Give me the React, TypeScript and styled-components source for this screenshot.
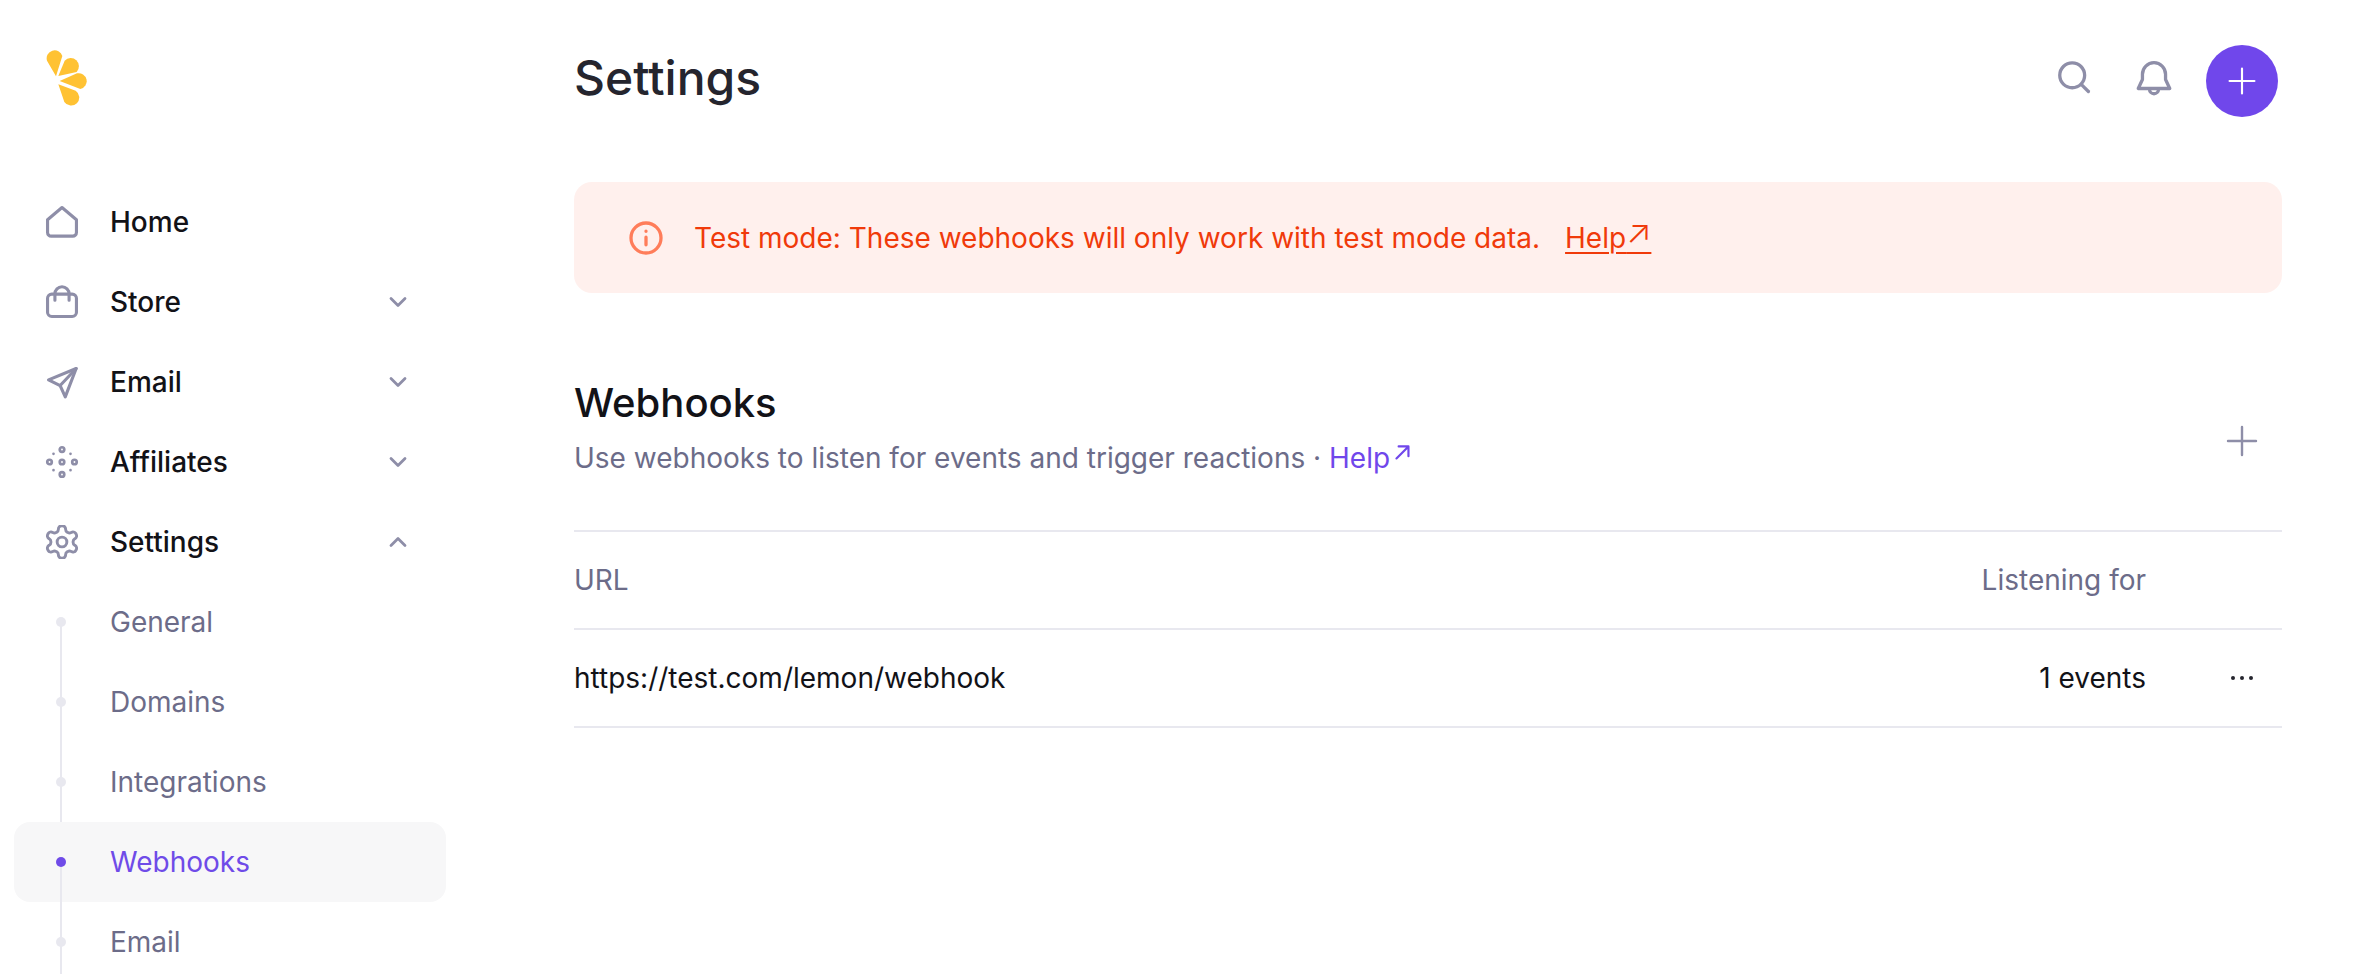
import { FC, ReactNode } from "react";
import styled, { createGlobalStyle } from "styled-components";

const GlobalStyle = createGlobalStyle`
  html, body {
    margin: 0;
    padding: 0;
    height: 974px;
    overflow: hidden;
    background: #fff;
    font-family: Inter, "Liberation Sans", sans-serif;
  }
`;

const Shell = styled.div`
  display: grid;
  grid-template-columns: 574px 1fr;
  height: 974px;
  overflow: hidden;
`;

const Sidebar = styled.aside`
  display: flex;
  flex-direction: column;
  padding: 50px 0 0 14px;
`;

const LogoWrap = styled.div`
  height: 132px;
  padding-left: 32px;
`;

const Nav = styled.nav`
  display: flex;
  flex-direction: column;
  width: 432px;
`;

const NavRow = styled.div`
  display: flex;
  align-items: center;
  height: 80px;
  flex: none;
  padding-left: 32px;
  font-size: 28px;
  font-weight: 500;
  color: #121217;
  svg.icon {
    flex: none;
    width: 34px;
    height: 34px;
    margin: 0 31px 0 -1px;
    color: #8e8ea8;
  }
`;

const Chevron = styled.svg`
  margin-left: auto;
  margin-right: 34px;
  width: 28px;
  height: 28px;
  color: #8e8ea8;
`;

const SubRow = styled.div<{ $active?: boolean }>`
  position: relative;
  display: flex;
  align-items: center;
  height: 80px;
  flex: none;
  padding-left: 96px;
  font-size: 28px;
  font-weight: 400;
  border-radius: 16px;
  color: ${(p) => (p.$active ? "#6f4be8" : "#6c6c89")};
  background: ${(p) => (p.$active ? "#f7f7f8" : "transparent")};
  &::before {
    content: "";
    position: absolute;
    left: 46px;
    top: 40px;
    width: 2px;
    height: 80px;
    background: #e8e8ef;
  }
  &::after {
    content: "";
    position: absolute;
    left: 42px;
    top: 35px;
    width: 10px;
    height: 10px;
    border-radius: 50%;
    background: ${(p) => (p.$active ? "#6f4be8" : "#e8e8ef")};
  }
`;

const Main = styled.main`
  padding: 0 78px 0 0;
  display: flex;
  flex-direction: column;
`;

const TopBar = styled.header`
  display: flex;
  align-items: center;
  height: 155px;
  flex: none;
`;

const PageTitle = styled.h1`
  margin: 0;
  font-size: 48px;
  font-weight: 500;
  color: #25252e;
`;

const TopActions = styled.div`
  margin-left: auto;
  display: flex;
  align-items: center;
  gap: 44px;
  margin-right: 4px;
`;

const GhostIcon = styled.button`
  display: flex;
  padding: 0;
  border: 0;
  background: none;
  color: #8e8ea8;
  svg {
    width: 36px;
    height: 36px;
  }
`;

const CreateButton = styled.button`
  display: flex;
  align-items: center;
  justify-content: center;
  width: 72px;
  height: 72px;
  margin: 7px 0 0 -10px;
  padding: 0;
  border: 0;
  border-radius: 50%;
  background: #7047eb;
  color: #fff;
  svg {
    width: 32px;
    height: 32px;
  }
`;

const Banner = styled.div`
  display: flex;
  align-items: center;
  height: 111px;
  margin-top: 27px;
  padding-left: 54px;
  flex: none;
  border-radius: 18px;
  background: #fff0ed;
  color: #f03a0a;
  font-size: 28px;
  svg.info {
    width: 36px;
    height: 36px;
    margin-right: 30px;
    color: #ff7d5a;
  }
`;

const BannerLink = styled.a`
  margin-left: 25px;
  color: #f03a0a;
  text-decoration: underline;
  text-decoration-thickness: 2px;
  text-underline-offset: 4px;
`;

const ArrowGlyph = styled.span`
  font-size: 33px;
  font-weight: 300;
  line-height: 0;
  position: relative;
  top: -5px;
`;

const SectionHead = styled.section`
  display: flex;
  align-items: center;
  height: 239px;
  flex: none;
  padding-top: 58px;
  box-sizing: border-box;
  border-bottom: 2px solid #e8e8ef;
`;

const HeadText = styled.div`
  display: flex;
  flex-direction: column;
  gap: 14px;
  margin-bottom: 29px;
`;

const SectionTitle = styled.h2`
  margin: 0;
  font-size: 40px;
  font-weight: 500;
  color: #121217;
`;

const SectionSub = styled.p`
  margin: 0;
  font-size: 28px;
  color: #6c6c89;
  a {
    display: inline-flex;
    align-items: flex-start;
    color: #7047eb;
    svg {
      width: 24px;
      height: 24px;
      margin-left: 1px;
    }
  }
`;

const HeadAdd = styled.button`
  display: flex;
  margin-left: auto;
  margin-right: 22px;
  padding: 0;
  border: 0;
  background: none;
  color: #8e8ea8;
  svg {
    width: 36px;
    height: 36px;
  }
`;

const TableRow = styled.div<{ $head?: boolean }>`
  display: grid;
  grid-template-columns: 1fr auto 136px;
  align-items: center;
  height: 96px;
  border-bottom: 2px solid #e8e8ef;
  font-size: 28px;
  color: ${(p) => (p.$head ? "#6c6c89" : "#121217")};
`;

const MoreCell = styled.div`
  display: flex;
  justify-content: flex-end;
  padding-right: 22px;
  color: #25252e;
  svg {
    width: 36px;
    height: 36px;
  }
`;

const Stroke: FC<{ className?: string; children: ReactNode; w?: number; box?: string }> = ({ className, children, w = 2.2, box = "0 0 24 24" }) => (
  <svg className={className} viewBox={box} fill="none" stroke="currentColor" strokeWidth={w} strokeLinecap="round" strokeLinejoin="round">
    {children}
  </svg>
);

const Logo = () => (
  <svg width="42" height="56" viewBox="137 90 126 168" fill="#ffc233">
    <path d="M167 169 L140 122 A24 24 0 1 1 186 108 Z" />
    <path d="M174 168 L193 122 A24.5 24.5 0 1 1 229 156 Z" />
    <path d="M178 183 L230 160 A24 24 0 1 1 240 207 Z" />
    <path d="M174 193 L226 212 A24.5 24.5 0 1 1 192 246 Z" />
  </svg>
);

const ChevronIcon: FC<{ up?: boolean }> = ({ up }) => (
  <Chevron viewBox="0 0 24 24" fill="none" stroke="currentColor" strokeWidth="2.4" strokeLinecap="round" strokeLinejoin="round">
    <path d={up ? "M6 15l6-6 6 6" : "M6 9l6 6 6-6"} />
  </Chevron>
);

const ArrowUpRight = () => (
  <svg viewBox="0 0 22 22" fill="none" stroke="currentColor" strokeWidth="2" strokeLinecap="round" strokeLinejoin="round">
    <path d="M5 16L16 5M7 5h9v9" />
  </svg>
);

const PlusIcon = () => (
  <svg viewBox="0 0 36 36" fill="none" stroke="currentColor" strokeWidth="2.4" strokeLinecap="round">
    <path d="M18 4v28M4 18h28" />
  </svg>
);

export default function App() {
  return (
    <Shell>
      <GlobalStyle />
      <Sidebar>
        <LogoWrap>
          <Logo />
        </LogoWrap>
        <Nav>
          <NavRow>
            <Stroke className="icon">
              <path d="M1.8 10.4L12 1.8l10.2 8.6v9a2.6 2.6 0 0 1-2.6 2.6H4.4a2.6 2.6 0 0 1-2.6-2.6z" />
            </Stroke>
            Home
          </NavRow>
          <NavRow>
            <Stroke className="icon">
              <rect x="1.8" y="6.4" width="20.4" height="15.8" rx="3" />
              <path d="M7 10.8V6.2a5 5 0 0 1 10 0v4.6" />
            </Stroke>
            Store
            <ChevronIcon />
          </NavRow>
          <NavRow>
            <Stroke className="icon">
              <path d="M22 2.5L2.5 10.5l8.2 4 3.6 8z" />
              <path d="M22 2.5L10.7 14.5" />
            </Stroke>
            Email
            <ChevronIcon />
          </NavRow>
          <NavRow>
            <Stroke className="icon" w={1.9}>
              <circle cx="12" cy="3.2" r="1.6" />
              <circle cx="3.2" cy="12" r="1.6" />
              <circle cx="12" cy="12" r="1.6" />
              <circle cx="20.8" cy="12" r="1.6" />
              <circle cx="12" cy="20.8" r="1.6" />
              <path d="M6 6.2h.01M18 6.2h.01M6 17.8h.01M18 17.8h.01" />
            </Stroke>
            Affiliates
            <ChevronIcon />
          </NavRow>
          <NavRow>
            <Stroke className="icon" box="1.5 1.5 21 21" w={1.8}>
              <path d="M12.22 2h-.44a2 2 0 0 0-2 2v.18a2 2 0 0 1-1 1.73l-.43.25a2 2 0 0 1-2 0l-.15-.08a2 2 0 0 0-2.73.73l-.22.38a2 2 0 0 0 .73 2.73l.15.1a2 2 0 0 1 1 1.72v.51a2 2 0 0 1-1 1.74l-.15.09a2 2 0 0 0-.73 2.73l.22.38a2 2 0 0 0 2.73.73l.15-.08a2 2 0 0 1 2 0l.43.25a2 2 0 0 1 1 1.73V20a2 2 0 0 0 2 2h.44a2 2 0 0 0 2-2v-.18a2 2 0 0 1 1-1.73l.43-.25a2 2 0 0 1 2 0l.15.08a2 2 0 0 0 2.73-.73l.22-.39a2 2 0 0 0-.73-2.73l-.15-.08a2 2 0 0 1-1-1.74v-.5a2 2 0 0 1 1-1.74l.15-.09a2 2 0 0 0 .73-2.73l-.22-.38a2 2 0 0 0-2.73-.73l-.15.08a2 2 0 0 1-2 0l-.43-.25a2 2 0 0 1-1-1.73V4a2 2 0 0 0-2-2z" />
              <circle cx="12" cy="12" r="3" />
            </Stroke>
            Settings
            <ChevronIcon up />
          </NavRow>
          <SubRow>General</SubRow>
          <SubRow>Domains</SubRow>
          <SubRow>Integrations</SubRow>
          <SubRow $active>Webhooks</SubRow>
          <SubRow>Email</SubRow>
        </Nav>
      </Sidebar>
      <Main>
        <TopBar>
          <PageTitle>Settings</PageTitle>
          <TopActions>
            <GhostIcon aria-label="Search">
              <Stroke>
                <circle cx="10.8" cy="10.2" r="8.3" />
                <path d="M17 16.4l4.6 4.6" />
              </Stroke>
            </GhostIcon>
            <GhostIcon aria-label="Notifications">
              <Stroke>
                <path d="M1.5 19h21l-2.8-6V9.5a7.7 7.7 0 0 0-15.4 0V13z" />
                <path d="M9 19.5a3 3 0 0 0 6 0" />
              </Stroke>
            </GhostIcon>
            <CreateButton aria-label="Create">
              <PlusIcon />
            </CreateButton>
          </TopActions>
        </TopBar>
        <Banner>
          <Stroke className="info">
            <circle cx="12" cy="12" r="10" />
            <path d="M12 11.5v5M12 7.5h.01" />
          </Stroke>
          Test mode: These webhooks will only work with test mode data.
          <BannerLink>
            Help<ArrowGlyph>↗</ArrowGlyph>
          </BannerLink>
        </Banner>
        <SectionHead>
          <HeadText>
            <SectionTitle>Webhooks</SectionTitle>
            <SectionSub>
              Use webhooks to listen for events and trigger reactions ·{" "}
              <a>
                Help
                <ArrowUpRight />
              </a>
            </SectionSub>
          </HeadText>
          <HeadAdd aria-label="Add webhook">
            <PlusIcon />
          </HeadAdd>
        </SectionHead>
        <TableRow $head>
          <div>URL</div>
          <div>Listening for</div>
          <div />
        </TableRow>
        <TableRow>
          <div>https://test.com/lemon/webhook</div>
          <div>1 events</div>
          <MoreCell>
            <svg viewBox="0 0 36 36" fill="currentColor">
              <circle cx="9" cy="18" r="2" />
              <circle cx="18" cy="18" r="2" />
              <circle cx="27" cy="18" r="2" />
            </svg>
          </MoreCell>
        </TableRow>
      </Main>
    </Shell>
  );
}
